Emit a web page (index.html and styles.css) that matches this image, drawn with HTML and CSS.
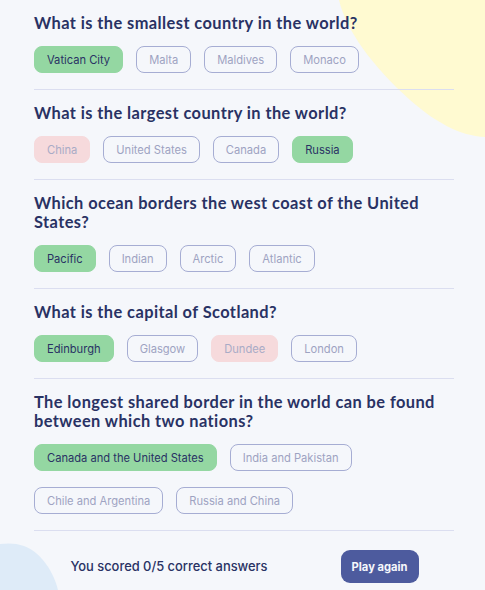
FILE: index.html
```html
<!DOCTYPE html>
<html lang="en">
<head>
<meta charset="utf-8">
<title>Quizzical</title>
<link rel="stylesheet" href="styles.css">
</head>
<body>
<svg class="blob blob-yellow" width="150" height="140" viewBox="335 0 150 140" aria-hidden="true">
  <path d="M339,0 C346,30 372,66 410,100 C435,122 460,136 485,137 L485,0 Z" fill="#FFFAD1"/>
</svg>
<svg class="blob blob-blue" width="60" height="50" viewBox="0 540 60 50" aria-hidden="true">
  <path d="M0,544 C8,543 16,543 24,546 C40,552 53,570 58,590 L0,590 Z" fill="#DEEBF8"/>
</svg>
<main class="quiz">
  <section class="question">
    <h2>What is the smallest country in the world?</h2>
    <div class="answers">
      <span class="answer correct">Vatican City</span>
      <span class="answer">Malta</span>
      <span class="answer">Maldives</span>
      <span class="answer">Monaco</span>
    </div>
  </section>
  <section class="question">
    <h2>What is the largest country in the world?</h2>
    <div class="answers">
      <span class="answer wrong">China</span>
      <span class="answer">United States</span>
      <span class="answer">Canada</span>
      <span class="answer correct">Russia</span>
    </div>
  </section>
  <section class="question">
    <h2>Which ocean borders the west coast of the United States?</h2>
    <div class="answers">
      <span class="answer correct">Pacific</span>
      <span class="answer">Indian</span>
      <span class="answer">Arctic</span>
      <span class="answer">Atlantic</span>
    </div>
  </section>
  <section class="question">
    <h2>What is the capital of Scotland?</h2>
    <div class="answers">
      <span class="answer correct">Edinburgh</span>
      <span class="answer">Glasgow</span>
      <span class="answer wrong">Dundee</span>
      <span class="answer">London</span>
    </div>
  </section>
  <section class="question">
    <h2>The longest shared border in the world can be found between which two nations?</h2>
    <div class="answers">
      <span class="answer correct">Canada and the United States</span>
      <span class="answer">India and Pakistan</span>
      <span class="answer">Chile and Argentina</span>
      <span class="answer">Russia and China</span>
    </div>
  </section>
  <footer class="result">
    <p class="score">You scored 0/5 correct answers</p>
    <button class="play-again" type="button">Play again</button>
  </footer>
</main>
</body>
</html>
```
FILE: styles.css
```css
* { box-sizing: border-box; }

html, body {
  margin: 0;
  height: 590px;
  overflow: hidden;
}

body {
  background: #F5F7FB;
  color: #293264;
  font-family: Inter, "Noto Sans", sans-serif;
  position: relative;
}

.blob {
  position: absolute;
  z-index: 0;
  display: block;
}
.blob-yellow { top: 0; right: 0; }
.blob-blue { bottom: 0; left: 0; }

.quiz {
  position: relative;
  z-index: 1;
  width: 420px;
  margin: 0 0 0 34px;
  padding-top: 13px;
}

.question {
  border-bottom: 1px solid #DBDEF0;
  padding-bottom: 16px;
  margin-bottom: 13px;
}

.question h2 {
  font-family: Lato, "Open Sans", sans-serif;
  font-weight: 700;
  font-size: 16.4px;
  letter-spacing: 0.42px;
  line-height: 19px;
  margin: 0 0 14px;
  color: #293264;
}

.answers {
  display: flex;
  flex-wrap: wrap;
  column-gap: 13px;
  row-gap: 16px;
}

.answer {
  display: inline-flex;
  align-items: center;
  height: 27px;
  padding: 0 12px;
  border-radius: 8px;
  border: 1px solid #A6ADD3;
  color: #9EA3C2;
  font-size: 11.15px;
  font-weight: 400;
}

.answer.correct {
  background: #94D7A2;
  border-color: #94D7A2;
  color: #293264;
}

.answer.wrong {
  background: #F6DADC;
  border-color: #F6DADC;
  color: #A9ABC6;
}

.result {
  display: flex;
  align-items: center;
  justify-content: center;
  gap: 73px;
  margin-top: 19px;
  margin-left: -34px;
  padding-left: 4px;
  width: 485px;
}

.score {
  margin: 0;
  font-size: 12.9px;
  font-weight: 500;
  color: #293264;
}

.play-again {
  font-family: Inter, "Noto Sans", sans-serif;
  background: #4D5B9E;
  color: #F5F7FB;
  border: none;
  border-radius: 9px;
  height: 33px;
  padding: 0 11px;
  font-size: 11.2px;
  font-weight: 700;
}
```
